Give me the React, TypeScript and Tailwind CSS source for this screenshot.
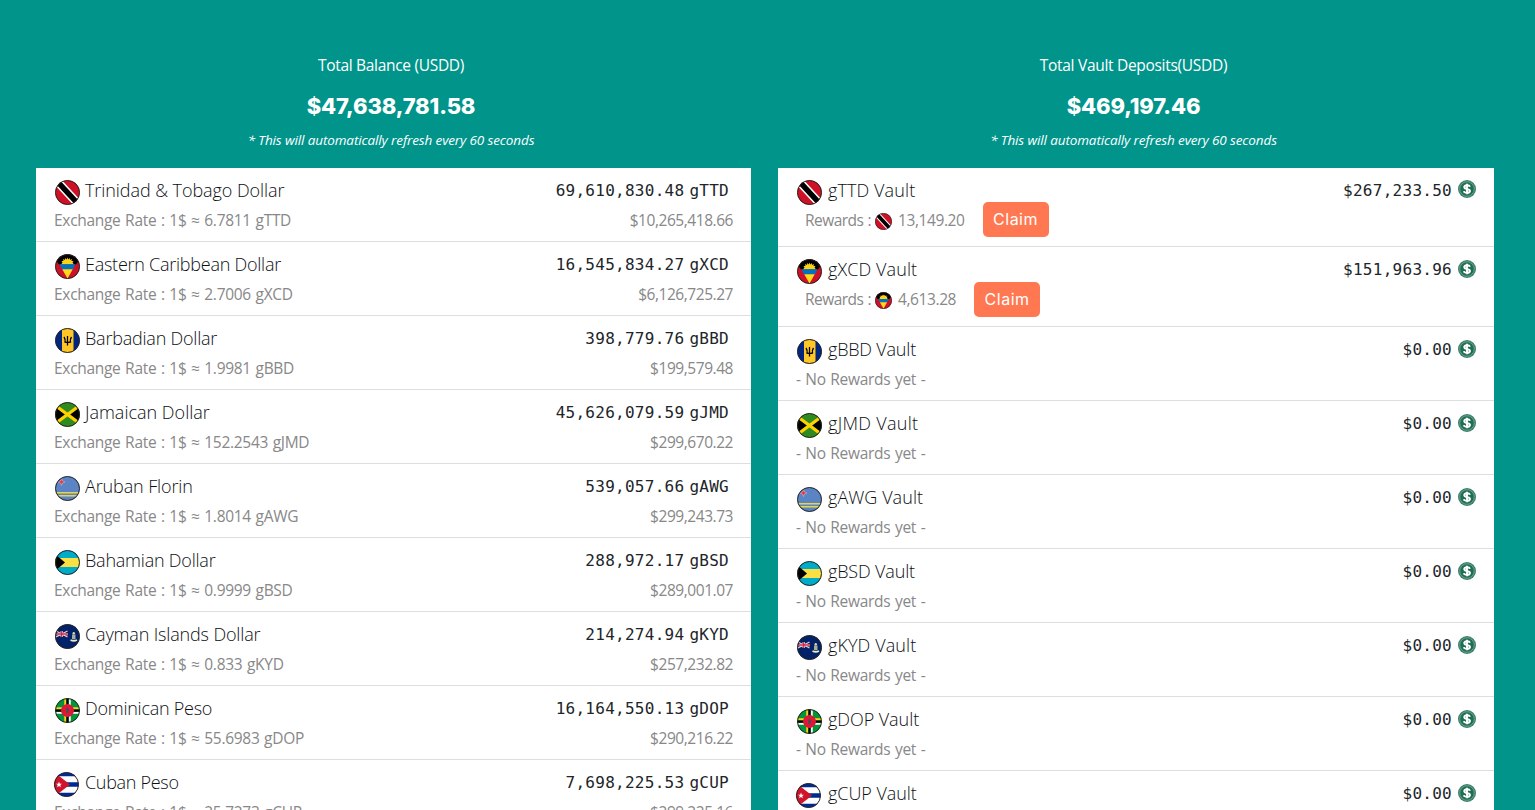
import React from "react";

type Code = "TTD" | "XCD" | "BBD" | "JMD" | "AWG" | "BSD" | "KYD" | "DOP" | "CUP";

const art: Record<Code, React.ReactNode> = {
  TTD: (
    <>
      <rect width="50" height="50" fill="#ce1126" />
      <path d="M0 -2L50 52" stroke="#fff" strokeWidth="17" />
      <path d="M0 -2L50 52" stroke="#000" strokeWidth="11" />
    </>
  ),
  XCD: (
    <>
      <rect width="50" height="50" fill="#ce1126" />
      <path d="M-2 0H52V8L42 21H8L-2 8Z" fill="#000" />
      <path d="M25 7l1.500 4 3-3 .5 4 4-2-1 4 4 0-2 3 3 4H12l3-4-2-3 4 0-1-4 4 2 .5-4 3 3z" fill="#fcd116" />
      <path d="M9 20.500H41L35.500 31H14.500Z" fill="#0072c6" />
      <path d="M14.500 30.500H35.500L25 49Z" fill="#ffd91a" />
    </>
  ),
  BBD: (
    <>
      <rect width="50" height="50" fill="#00267f" />
      <rect x="14" width="23" height="50" fill="#ffc726" />
      <path d="M25 16V35M18 18q3 4 2 10q4 1 5 0q1 1 6 0q-1-6 2-10" fill="none" stroke="#000" strokeWidth="2.6" />
    </>
  ),
  JMD: (
    <>
      <rect width="50" height="50" fill="#2f8a20" />
      <path d="M0 8L20 25L0 42ZM50 8L30 25L50 42Z" fill="#000" />
      <path d="M2 8L48 42M48 8L2 42" stroke="#fed100" strokeWidth="6.5" />
    </>
  ),
  AWG: (
    <>
      <rect width="50" height="50" fill="#5b84c4" />
      <path d="M0 33.5H50M0 39.5H50" stroke="#e8d44c" strokeWidth="3" />
      <path d="M13 5l2 5 5 2-5 2-2 5-2-5-5-2 5-2z" fill="#ef3340" stroke="#fff" strokeWidth="0.6" />
    </>
  ),
  BSD: (
    <>
      <rect width="50" height="50" fill="#00abc9" />
      <rect y="16" width="50" height="18" fill="#fae042" />
      <path d="M0 8L20 25L0 42Z" fill="#000" />
    </>
  ),
  KYD: (
    <>
      <rect width="50" height="50" fill="#012169" />
      <path d="M2 14L25 26M25 14L2 26" stroke="#e9c9d4" strokeWidth="2.600" />
      <path d="M13.500 14V26M1 20H26" stroke="#fff" strokeWidth="4.500" />
      <path d="M13.500 14V26M1 20H26" stroke="#d0203c" strokeWidth="2.600" />
      <path d="M34 21h7v9h-7z" fill="#a3b09a" />
      <circle cx="37.500" cy="18.500" r="2.400" fill="#e8d9a0" />
      <path d="M31 32q6.500 3 13 0" fill="none" stroke="#f3e9c4" strokeWidth="3.500" />
    </>
  ),
  DOP: (
    <>
      <rect width="50" height="50" fill="#009639" />
      <path d="M20.500 0V50M0 20.500H50" stroke="#fcd116" strokeWidth="4" />
      <path d="M29.500 0V50M0 29.500H50" stroke="#fff" strokeWidth="4" />
      <path d="M25 0V50M0 25H50" stroke="#000" strokeWidth="4.500" />
      <circle cx="25" cy="25" r="13" fill="#e4143a" />
      <circle cx="25" cy="25" r="9" fill="none" stroke="#b8302f" strokeWidth="2" strokeDasharray="2 3" />
      <ellipse cx="25" cy="25" rx="2.500" ry="5.500" fill="#3b5a3b" />
      <circle cx="26" cy="24" r="2" fill="#46408c" />
    </>
  ),
  CUP: (
    <>
      <rect width="50" height="50" fill="#fff" />
      <path d="M0 4H50M0 25H50M0 46H50" stroke="#002a8f" strokeWidth="9" />
      <path d="M0 0L32 25L0 50Z" fill="#cf142b" />
      <path d="M10 19l1.600 4.300H16l-3.500 2.900 1.300 4.500-3.800-2.700-3.800 2.700 1.300-4.500L4 23.300h4.400z" fill="#fff" />
    </>
  ),
};

function Flag({ code, small = false, id }: { code: Code; small?: boolean; id: string }) {
  return (
    <svg viewBox="0 0 50 50" className={small ? "block h-[17px] w-[17px] shrink-0" : "block h-[25px] w-[25px] shrink-0"}>
      <clipPath id={id}>
        <circle cx="25" cy="25" r="24.500" />
      </clipPath>
      <g clipPath={`url(#${id})`}>{art[code]}</g>
      <circle cx="25" cy="25" r="24" fill="none" stroke="#2a2622" strokeWidth="2" />
    </svg>
  );
}

function Coin() {
  return (
    <svg viewBox="0 0 36 36" className="block h-[18px] w-[18px] shrink-0">
      <circle cx="18" cy="18" r="18" fill="#3c8069" />
      <circle cx="18" cy="18" r="14.500" fill="#216e56" stroke="#8fb8aa" strokeWidth="1.200" />
      <path d="M24 13.500q-1-3-6-3t-5.500 3.500q0 3 5.500 4t6 4q-.5 3.500-6 3.500t-6.500-3M18 7.500V28.500" fill="none" stroke="#fff" strokeWidth="3.800" />
    </svg>
  );
}

const balances: { code: Code; name: string; nameCls: string; rate: string; amount: string; usd: string }[] = [
  { code: "TTD", name: "Trinidad & Tobago Dollar", nameCls: "tracking-[-0.07px]", rate: "6.7811", amount: "69,610,830.48", usd: "$10,265,418.66" },
  { code: "XCD", name: "Eastern Caribbean Dollar", nameCls: "tracking-[-0.25px]", rate: "2.7006", amount: "16,545,834.27", usd: "$6,126,725.27" },
  { code: "BBD", name: "Barbadian Dollar", nameCls: "tracking-[-0.22px]", rate: "1.9981", amount: "398,779.76", usd: "$199,579.48" },
  { code: "JMD", name: "Jamaican Dollar", nameCls: "tracking-[0px]", rate: "152.2543", amount: "45,626,079.59", usd: "$299,670.22" },
  { code: "AWG", name: "Aruban Florin", nameCls: "tracking-[-0.12px]", rate: "1.8014", amount: "539,057.66", usd: "$299,243.73" },
  { code: "BSD", name: "Bahamian Dollar", nameCls: "tracking-[-0.22px]", rate: "0.9999", amount: "288,972.17", usd: "$289,001.07" },
  { code: "KYD", name: "Cayman Islands Dollar", nameCls: "tracking-[-0.15px]", rate: "0.833", amount: "214,274.94", usd: "$257,232.82" },
  { code: "DOP", name: "Dominican Peso", nameCls: "tracking-[-0.25px]", rate: "55.6983", amount: "16,164,550.13", usd: "$290,216.22" },
  { code: "CUP", name: "Cuban Peso", nameCls: "tracking-[-0.3px]", rate: "25.7273", amount: "7,698,225.53", usd: "$299,225.16" },
];

const vaults: { code: Code; nameCls: string; amount: string; reward?: string; row: string; coin: string; btn?: string }[] = [
  { code: "TTD", nameCls: "tracking-[0.1px]", amount: "$267,233.50", reward: "13,149.20", row: "h-[79px]", coin: "pt-[2px]", btn: "-mt-[6px]" },
  { code: "XCD", nameCls: "tracking-[0.1px]", amount: "$151,963.96", reward: "4,613.28", row: "h-[80px]", coin: "pt-[3px]", btn: "-mt-[5px]" },
  { code: "BBD", nameCls: "tracking-[-0.2px]", amount: "$0.00", row: "h-[74px]", coin: "pt-[3px]" },
  { code: "JMD", nameCls: "tracking-[0.3px]", amount: "$0.00", row: "h-[74px]", coin: "pt-[3px]" },
  { code: "AWG", nameCls: "tracking-[0.05px]", amount: "$0.00", row: "h-[74px]", coin: "pt-[3px]" },
  { code: "BSD", nameCls: "tracking-[-0.15px]", amount: "$0.00", row: "h-[74px]", coin: "pt-[3px]" },
  { code: "KYD", nameCls: "tracking-[0.1px]", amount: "$0.00", row: "h-[74px]", coin: "pt-[3px]" },
  { code: "DOP", nameCls: "tracking-[-0.05px]", amount: "$0.00", row: "h-[74px]", coin: "pt-[3px]" },
  { code: "CUP", nameCls: "tracking-[-0.05px]", amount: "$0.00", row: "h-[74px]", coin: "pt-[3px]" },
];

const titleCls = "text-[18px] leading-6 font-light text-[#0d1013]";
const subCls = "text-[15.5px] leading-6 tracking-[-0.3px] [word-spacing:0.9px] text-[#888]";
const monoCls = "pt-px font-['DejaVu_Sans_Mono','Liberation_Mono',monospace] text-[16px] leading-6 tracking-[0.27px] text-[#212529]";

function Header({ title, total }: { title: string; total: string }) {
  return (
    <header className="flex h-[168px] flex-col items-center pt-[53px] pr-[5px] text-white">
      <p className="text-[15.5px] leading-6 tracking-[-0.3px]">{title}</p>
      <p className="mt-[14px] font-['Inter',sans-serif] text-[22px] leading-[30px] font-extrabold tracking-[-0.15px]">{total}</p>
      <p className="mt-[9px] text-[13.5px] leading-5 italic tracking-[-0.12px]">* This will automatically refresh every 60 seconds</p>
    </header>
  );
}

export default function App() {
  return (
    <main className="flex h-[810px] w-full gap-[27px] overflow-hidden bg-[#00948b] pr-[41px] pl-9 font-['Open_Sans','Noto_Sans',sans-serif] whitespace-nowrap">
      <section className="w-[715px] shrink-0">
        <Header title="Total Balance (USDD)" total="$47,638,781.58" />
        <ul className="bg-white">
          {balances.map((b) => (
            <li key={b.code} className="h-[74px] border-b border-[#dedede] pt-[10px] pr-[18px] pl-[18px]">
              <div className="flex h-[30px] items-start justify-between">
                <div className="flex items-start">
                  <span className={b.code === "CUP" ? "mr-[6px] pt-[2px]" : "mr-[5px] ml-[1px] pt-[2px]"}>
                    <Flag code={b.code} id={`balance-${b.code}`} />
                  </span>
                  <span className={`${titleCls} ${b.nameCls}`}>{b.name}</span>
                </div>
                <div className={`flex gap-[5px] pr-1 ${monoCls}`}>
                  <span>{b.amount}</span>
                  <span>g{b.code}</span>
                </div>
              </div>
              <div className={`flex justify-between ${subCls}`}>
                <span>Exchange Rate : 1$ ≈ {b.rate} g{b.code}</span>
                <span className="tracking-[-0.45px]">{b.usd}</span>
              </div>
            </li>
          ))}
        </ul>
      </section>
      <section className="w-[716px] shrink-0">
        <Header title="Total Vault Deposits(USDD)" total="$469,197.46" />
        <ul className="bg-white">
          {vaults.map((v) => (
            <li key={v.code} className={`${v.row} border-b border-[#dedede] pt-[10px] pr-[18px] pl-[18px]`}>
              <div className="flex h-[30px] items-start justify-between">
                <div className="flex items-start">
                  <span className={v.code === "CUP" ? "mr-[7px] pt-[2px]" : "mr-[6px] ml-[1px] pt-[2px]"}>
                    <Flag code={v.code} id={`vault-${v.code}`} />
                  </span>
                  <span className={`${titleCls} ${v.nameCls}`}>g{v.code} Vault</span>
                </div>
                <div className="flex items-start gap-[6px]">
                  <span className={monoCls}>{v.amount}</span>
                  <span className={v.coin}>
                    <Coin />
                  </span>
                </div>
              </div>
              {v.reward ? (
                <div className={`flex items-start pl-[9px] ${subCls}`}>
                  <span className="w-[70px] tracking-[-0.55px]">Rewards :</span>
                  <span className="pt-[5px]">
                    <Flag code={v.code} small id={`reward-${v.code}`} />
                  </span>
                  <span className="ml-[6px] tracking-[-0.4px]">{v.reward}</span>
                  <button className={`${v.btn} ml-[18px] h-[35px] w-[66px] rounded-[5px] bg-[#ff7851] font-['Inter',sans-serif] text-[16px] leading-[35px] font-normal tracking-[0.5px] text-white`}>
                    Claim
                  </button>
                </div>
              ) : (
                <p className={subCls}>- No Rewards yet -</p>
              )}
            </li>
          ))}
        </ul>
      </section>
    </main>
  );
}
